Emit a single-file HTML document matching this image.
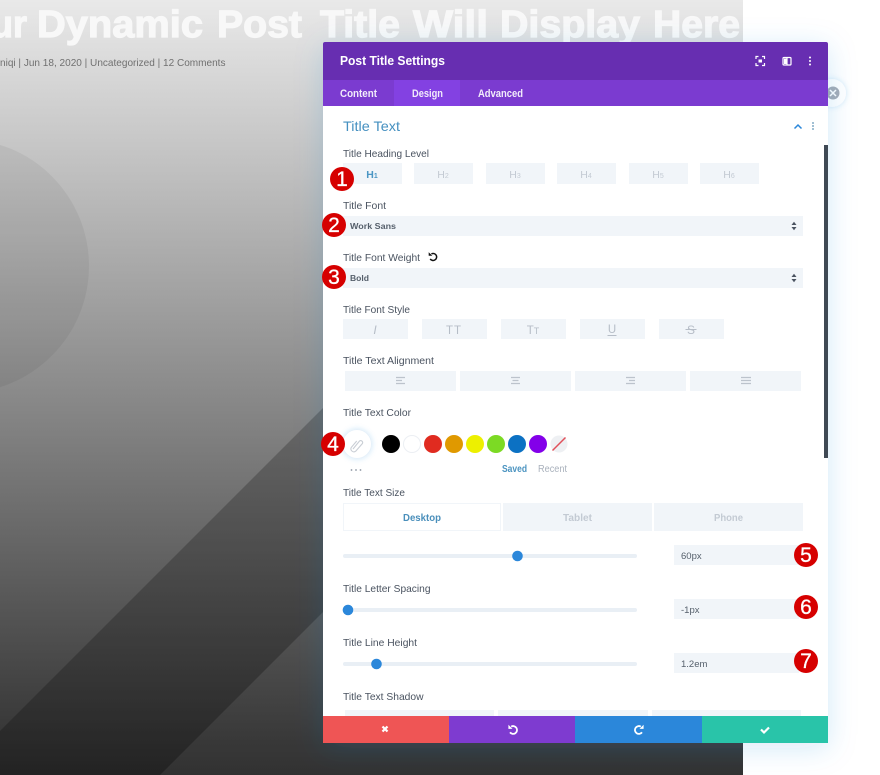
<!DOCTYPE html>
<html><head><meta charset="utf-8"><title>Post Title Settings</title>
<style>
html,body{margin:0;padding:0;background:#fff;width:880px;height:775px;overflow:hidden}
svg{display:block;font-family:"Liberation Sans",sans-serif;filter:blur(.3px)}
.l{font-size:10.5px;fill:#4a5360}
.b{fill:#f1f5f9}
.g{fill:none;stroke:#bcc3cc;stroke-width:1.3}
.n{fill:#fff;font-size:21px;text-anchor:middle;stroke:#fff;stroke-width:.3}
.c{fill:#d60000}
.h{font-size:10.5px;fill:#c3cad3;text-anchor:middle}
.t{font-size:38px;font-weight:bold;fill:#f8f8f8;stroke:#f8f8f8;stroke-width:1.2px}
</style></head><body>
<svg width="880" height="775" viewBox="0 0 880 775" xmlns="http://www.w3.org/2000/svg">
<defs>
<linearGradient id="bg" x1="0" y1="0" x2="0" y2="1"><stop offset="0" stop-color="#e9e9e9"/><stop offset="1" stop-color="#2d2d2d"/></linearGradient>
<filter id="sh" x="-20%" y="-20%" width="140%" height="140%"><feDropShadow dx="0" dy="5" stdDeviation="14" flood-color="#2b87da" flood-opacity=".18"/></filter>
<filter id="gl" x="-60%" y="-60%" width="220%" height="220%"><feDropShadow dx="0" dy="0" stdDeviation="3" flood-color="#2b87da" flood-opacity=".2"/></filter>
</defs>
<rect x="0" y="0" width="743" height="775" fill="url(#bg)"/>
<circle cx="-38" cy="266" r="127" fill="#000" opacity=".05"/>
<polygon points="0,731 400,331 600,335 160,775 0,775" fill="#000" opacity=".22"/>
<polygon points="160,775 600,335 743,335 743,775" fill="#fff" opacity=".02"/>
<text class="t" x="-9" y="37" textLength="36" lengthAdjust="spacingAndGlyphs">ur</text>
<text class="t" x="37" y="37" textLength="166" lengthAdjust="spacingAndGlyphs">Dynamic</text>
<text class="t" x="217" y="37" textLength="85" lengthAdjust="spacingAndGlyphs">Post</text>
<text class="t" x="320" y="37" textLength="80" lengthAdjust="spacingAndGlyphs">Title</text>
<text class="t" x="413" y="37" textLength="75" lengthAdjust="spacingAndGlyphs">Will</text>
<text class="t" x="500" y="37" textLength="140" lengthAdjust="spacingAndGlyphs">Display</text>
<text class="t" x="653" y="37" textLength="87" lengthAdjust="spacingAndGlyphs">Here</text>
<text x="0" y="66" font-size="10.5" fill="#707070" textLength="225.500" lengthAdjust="spacingAndGlyphs">niqi | Jun 18, 2020 | Uncategorized | 12 Comments</text>

<circle cx="832" cy="93" r="14" fill="#fff" filter="url(#gl)"/>
<circle cx="833" cy="93" r="6.500" fill="#a6acb6"/>
<path d="M830 90l6 6M836 90l-6 6" stroke="#fff" stroke-width="1.500"/>

<rect x="323" y="42" width="505" height="701" rx="2" fill="#fff" filter="url(#sh)"/>
<path d="M323 80V44a2 2 0 0 1 2-2h501a2 2 0 0 1 2 2v36z" fill="#672eb1"/>
<rect x="323" y="80" width="505" height="26" fill="#7b3bd0"/>
<rect x="394" y="80" width="66" height="26" fill="#8341e2"/>
<text x="340" y="65" font-size="12.500" font-weight="bold" fill="#fff" textLength="105" lengthAdjust="spacingAndGlyphs">Post Title Settings</text>
<g stroke="#fff" fill="none" stroke-width="1.200">
<path d="M756 59v-2.500h2.500M762 56.500h2.500v2.500M764.500 63v2.500H762M758.500 65.500H756V63"/>
<rect x="758.500" y="59.500" width="3.500" height="3" fill="#fff" stroke="none"/>
<rect x="783" y="57.500" width="8" height="7.500" rx="1"/><path d="M787 57.500v7.500" />
<rect x="784" y="58.500" width="2.500" height="5.500" fill="#fff" stroke="none"/>
</g>
<g fill="#fff"><circle cx="810" cy="57.500" r="1"/><circle cx="810" cy="61" r="1"/><circle cx="810" cy="64.500" r="1"/></g>
<g font-size="11" font-weight="bold" fill="#f2ecfb">
<text x="340" y="97" textLength="37" lengthAdjust="spacingAndGlyphs">Content</text>
<text x="412" y="97" textLength="31" lengthAdjust="spacingAndGlyphs">Design</text>
<text x="478" y="97" textLength="45" lengthAdjust="spacingAndGlyphs">Advanced</text>
</g>

<text x="343" y="131" font-size="14" fill="#4590c0" textLength="57" lengthAdjust="spacingAndGlyphs">Title Text</text>
<path d="M794.500 128.500l3.500-3.500 3.500 3.500" fill="none" stroke="#2b87da" stroke-width="1.500"/>
<g fill="#5e93b5"><circle cx="813" cy="123" r=".9"/><circle cx="813" cy="126" r=".9"/><circle cx="813" cy="129" r=".9"/></g>
<rect x="824" y="145" width="4" height="313" fill="#3f4954"/>

<text class="l" x="343" y="157" textLength="86" lengthAdjust="spacingAndGlyphs">Title Heading Level</text>
<rect class="b" x="343" y="163" width="59" height="21"/><rect class="b" x="414" y="163" width="59" height="21"/><rect class="b" x="486" y="163" width="59" height="21"/><rect class="b" x="557" y="163" width="59" height="21"/><rect class="b" x="629" y="163" width="59" height="21"/><rect class="b" x="700" y="163" width="59" height="21"/>
<text class="h" x="372" y="178" style="fill:#4b96c4;font-weight:bold">H<tspan font-size="7">1</tspan></text>
<text class="h" x="443" y="178">H<tspan font-size="7">2</tspan></text>
<text class="h" x="515" y="178">H<tspan font-size="7">3</tspan></text>
<text class="h" x="586" y="178">H<tspan font-size="7">4</tspan></text>
<text class="h" x="658" y="178">H<tspan font-size="7">5</tspan></text>
<text class="h" x="729" y="178">H<tspan font-size="7">6</tspan></text>

<text class="l" x="343" y="209" textLength="43" lengthAdjust="spacingAndGlyphs">Title Font</text>
<rect class="b" x="343" y="216" width="460" height="20"/>
<text x="350" y="229" font-size="8.500" font-weight="bold" fill="#56606c" textLength="46" lengthAdjust="spacingAndGlyphs">Work Sans</text>
<path d="M791.500 225l2.500-3.200 2.500 3.200zM791.500 227l2.500 3.200 2.500-3.200z" fill="#4a5360"/>

<text class="l" x="343" y="261" textLength="77" lengthAdjust="spacingAndGlyphs">Title Font Weight</text>
<g transform="translate(433,257)"><path d="M-2.800 1.900A3.500 3.500 0 1 0 -1.600 -3.100" fill="none" stroke="#111" stroke-width="1.500"/><polygon points="-4.300,-4.800 -4.300,-1.200 -0.700,-1.200" fill="#111"/></g>
<rect class="b" x="343" y="268" width="460" height="20"/>
<text x="350" y="281" font-size="8.500" font-weight="bold" fill="#56606c" textLength="19" lengthAdjust="spacingAndGlyphs">Bold</text>
<path d="M791.500 277l2.500-3.200 2.500 3.200zM791.500 279l2.500 3.200 2.500-3.200z" fill="#4a5360"/>

<text class="l" x="343" y="313" textLength="67" lengthAdjust="spacingAndGlyphs">Title Font Style</text>
<rect class="b" x="343" y="319" width="65" height="20"/><rect class="b" x="422" y="319" width="65" height="20"/><rect class="b" x="501" y="319" width="65" height="20"/><rect class="b" x="580" y="319" width="65" height="20"/><rect class="b" x="659" y="319" width="65" height="20"/>
<text x="375" y="334" font-size="12" font-style="italic" fill="#b6bdc7" text-anchor="middle">I</text>
<text x="454" y="334" font-size="11.500" fill="#b6bdc7" text-anchor="middle" letter-spacing="1">TT</text>
<text x="533" y="334" font-size="11.500" fill="#b6bdc7" text-anchor="middle">T<tspan font-size="9">T</tspan></text>
<text x="612" y="333" font-size="11.500" fill="#b6bdc7" text-anchor="middle">U</text><path d="M607.500 335.500h9" stroke="#b6bdc7"/>
<text x="691" y="334" font-size="12" fill="#b6bdc7" text-anchor="middle">S</text><path d="M685.500 329.500h11" stroke="#b6bdc7"/>

<text class="l" x="343" y="364" textLength="91" lengthAdjust="spacingAndGlyphs">Title Text Alignment</text>
<rect class="b" x="345" y="371" width="111" height="20"/><rect class="b" x="460" y="371" width="111" height="20"/><rect class="b" x="575" y="371" width="111" height="20"/><rect class="b" x="690" y="371" width="111" height="20"/>
<path class="g" d="M396 377.500h9M396 380.500h6M396 383.500h9M511 377.500h9M512.500 380.500h6M511 383.500h9M626 377.500h9M629 380.500h6M626 383.500h9M741 377.500h10M741 380.500h10M741 383.500h10"/>

<text class="l" x="343" y="416" textLength="68" lengthAdjust="spacingAndGlyphs">Title Text Color</text>
<circle cx="357" cy="444" r="14.500" fill="#fff" stroke="#e6f1fa" filter="url(#gl)"/>
<path d="M353 449l6.500-8a2 2 0 0 1 3 2.400l-6.800 7.800a3 3 0 0 1-4.500-3.700l5.500-6.500" fill="none" stroke="#c9ced5" stroke-width="1.100"/>
<circle cx="391" cy="444" r="9" fill="#000"/>
<circle cx="412" cy="444" r="8.500" fill="#fff" stroke="#eceff3"/>
<circle cx="433" cy="444" r="9" fill="#e02b20"/>
<circle cx="454" cy="444" r="9" fill="#e09900"/>
<circle cx="475" cy="444" r="9" fill="#edf000"/>
<circle cx="496" cy="444" r="9" fill="#7cda24"/>
<circle cx="517" cy="444" r="9" fill="#0c71c3"/>
<circle cx="538" cy="444" r="9" fill="#8300e9"/>
<circle cx="559" cy="444" r="8.500" fill="#eef0f3"/>
<path d="M552.500 450.500l13-13" stroke="#e0505a" stroke-width="1.500"/>
<g fill="#8d97a3"><circle cx="351.500" cy="470" r=".9"/><circle cx="356" cy="470" r=".9"/><circle cx="360.500" cy="470" r=".9"/></g>
<text x="502" y="472" font-size="10.500" font-weight="bold" fill="#4a93c0" textLength="25" lengthAdjust="spacingAndGlyphs">Saved</text>
<text x="538" y="472" font-size="10.500" fill="#a9b1bc" textLength="29" lengthAdjust="spacingAndGlyphs">Recent</text>

<text class="l" x="343" y="496" textLength="62" lengthAdjust="spacingAndGlyphs">Title Text Size</text>
<rect x="343.500" y="503.500" width="157" height="27" fill="#fff" stroke="#f1f5f9"/>
<rect class="b" x="503" y="503" width="149" height="28"/><rect class="b" x="654" y="503" width="149" height="28"/>
<text x="403" y="521" font-size="10.500" font-weight="bold" fill="#4a8fbb" textLength="38" lengthAdjust="spacingAndGlyphs">Desktop</text>
<text x="563" y="521" font-size="10.500" font-weight="bold" fill="#c3cad3" textLength="29" lengthAdjust="spacingAndGlyphs">Tablet</text>
<text x="714" y="521" font-size="10.500" font-weight="bold" fill="#c3cad3" textLength="29" lengthAdjust="spacingAndGlyphs">Phone</text>

<rect x="343" y="554" width="294" height="4" rx="2" fill="#e9eff5"/><circle cx="517.500" cy="556" r="5.300" fill="#2b87da"/>
<rect class="b" x="674" y="545" width="125" height="20"/>
<text x="681" y="559" font-size="9.500" fill="#56606c">60px</text>

<text class="l" x="343" y="592" textLength="87.500" lengthAdjust="spacingAndGlyphs">Title Letter Spacing</text>
<rect x="343" y="608" width="294" height="4" rx="2" fill="#e9eff5"/><circle cx="348" cy="610" r="5.300" fill="#2b87da"/>
<rect class="b" x="674" y="599" width="125" height="20"/>
<text x="681" y="613" font-size="9.500" fill="#56606c">-1px</text>

<text class="l" x="343" y="646" textLength="74" lengthAdjust="spacingAndGlyphs">Title Line Height</text>
<rect x="343" y="662" width="294" height="4" rx="2" fill="#e9eff5"/><circle cx="376.500" cy="664" r="5.300" fill="#2b87da"/>
<rect class="b" x="674" y="653" width="125" height="20"/>
<text x="681" y="667" font-size="9.500" fill="#56606c">1.2em</text>

<text class="l" x="343" y="700" textLength="80.500" lengthAdjust="spacingAndGlyphs">Title Text Shadow</text>
<rect class="b" x="345" y="710" width="149" height="7"/><rect class="b" x="498" y="710" width="150" height="7"/><rect class="b" x="652" y="710" width="149" height="7"/>

<rect x="323" y="716" width="126" height="27" fill="#ef5555"/>
<rect x="449" y="716" width="126" height="27" fill="#7e3bd0"/>
<rect x="575" y="716" width="127" height="27" fill="#2b87da"/>
<rect x="702" y="716" width="126" height="27" fill="#29c4a9"/>
<path d="M382.500 726.500l5 5M387.500 726.500l-5 5" stroke="#fff" stroke-width="2.200"/>
<g transform="translate(513,730)"><path d="M-3 2.300A3.900 3.900 0 1 0 -1.800 -3.400" fill="none" stroke="#fff" stroke-width="1.800"/><polygon points="-4.600,-5.200 -4.600,-1.100 -0.500,-1.100" fill="#fff"/></g>
<g transform="translate(639,730) scale(-1,1)"><path d="M-3 2.300A3.900 3.900 0 1 0 -1.800 -3.400" fill="none" stroke="#fff" stroke-width="1.800"/><polygon points="-4.600,-5.200 -4.600,-1.100 -0.500,-1.100" fill="#fff"/></g>
<path d="M761 729.500l3 3 5-5" fill="none" stroke="#fff" stroke-width="2.200"/>

<g class="c">
<circle cx="342" cy="179" r="12"/><circle cx="334" cy="225" r="12"/><circle cx="334" cy="277" r="12"/><circle cx="333" cy="444" r="12"/><circle cx="806" cy="555" r="12"/><circle cx="806" cy="607" r="12"/><circle cx="806" cy="661" r="12"/>
</g>
<text class="n" x="342" y="186">1</text>
<text class="n" x="334" y="232">2</text>
<text class="n" x="334" y="284">3</text>
<text class="n" x="333" y="451">4</text>
<text class="n" x="806" y="562">5</text>
<text class="n" x="806" y="614">6</text>
<text class="n" x="806" y="668">7</text>
</svg>
</body></html>
